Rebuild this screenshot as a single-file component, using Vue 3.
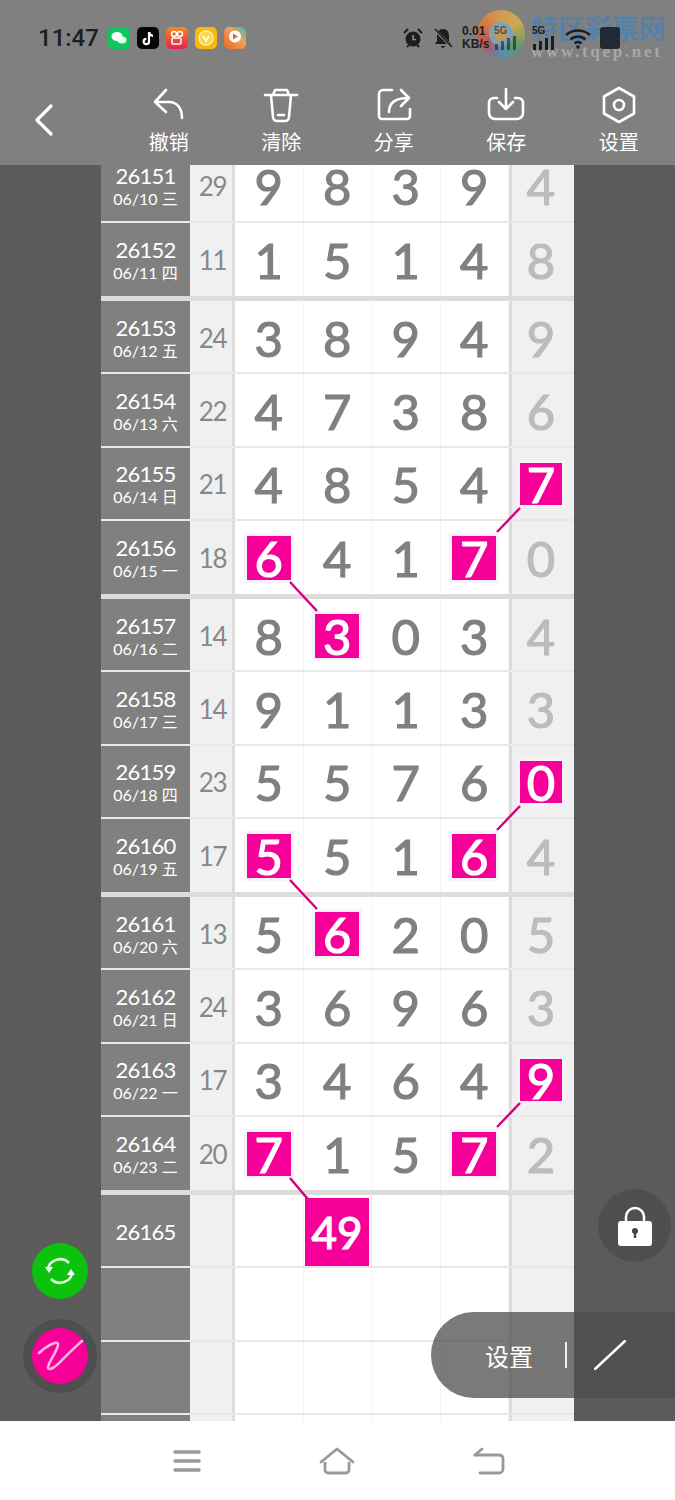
<template>
  <div class="page">
    <header class="top">
      <div class="status">
        <span class="time">11:47</span>
        <div class="apps">
          <svg v-for="a in apps" :key="a.name" class="app-icon" viewBox="0 0 22 22" v-html="a.svg"></svg>
        </div>
      </div>

      <div class="watermark">
        <div class="wm-logo"><div class="wm-hole"></div></div>
        <div class="wm-text">
          <div class="wm-name">特区彩票网</div>
          <div class="wm-url">www.tqep.net</div>
        </div>
      </div>

      <div class="sys">
        <svg class="sys-icon" viewBox="0 0 22 22">
          <circle cx="11" cy="12" r="7.5" fill="#1d1d1d" />
          <path d="M11 8v4.5h3" stroke="#8a8a8a" stroke-width="1.6" fill="none" />
          <path d="M2 6l4-4M20 6l-4-4M5 20l2-2M17 20l-2-2" stroke="#1d1d1d" stroke-width="2" />
        </svg>
        <svg class="sys-icon" viewBox="0 0 22 22">
          <path d="M11 2c-4 0-6 3-6 7v5l-2 3h16l-2-3V9c0-4-2-7-6-7z" fill="#1d1d1d" />
          <path d="M8.500 19h5l-2.500 2.500z" fill="#1d1d1d" />
          <path d="M2 2l18 18" stroke="#808080" stroke-width="3" />
          <path d="M3 2l17 18" stroke="#1d1d1d" stroke-width="1.500" />
        </svg>
        <div class="speed"><span>0.01</span><span>KB/s</span></div>
        <div class="signal-5g wide">
          <span>5G</span>
          <svg class="signal" viewBox="0 0 24 14">
            <rect x="1" y="8" width="3" height="6" fill="#1d1d1d" />
            <rect x="7" y="5" width="3" height="9" fill="#1d1d1d" />
            <rect x="13" y="2" width="3" height="12" fill="#1d1d1d" />
            <rect x="19" y="0" width="3" height="14" fill="#1d1d1d" />
          </svg>
        </div>
        <div class="signal-5g">
          <span>5G</span>
          <svg class="signal" viewBox="0 0 24 14">
            <rect x="1" y="8" width="3" height="6" fill="#1d1d1d" />
            <rect x="7" y="5" width="3" height="9" fill="#1d1d1d" />
            <rect x="13" y="2" width="3" height="12" fill="#1d1d1d" />
            <rect x="19" y="0" width="3" height="14" fill="#1d1d1d" />
          </svg>
        </div>
        <svg class="wifi" viewBox="0 0 28 22">
          <path d="M2 8c7-6 17-6 24 0M6.500 12.500c4.500-4 10.500-4 15 0M10.500 16.500c2-2 5-2 7 0" stroke="#1d1d1d" stroke-width="2.600" fill="none" />
          <circle cx="14" cy="20" r="1.800" fill="#1d1d1d" />
        </svg>
        <div class="battery"></div>
      </div>

      <div class="toolbar">
        <button class="back">
          <svg viewBox="0 0 24 36" width="24" height="36">
            <path d="M19 4L5 18l14 14" stroke="#fff" stroke-width="3.200" fill="none" stroke-linecap="round" stroke-linejoin="round" />
          </svg>
        </button>
        <div v-for="t in tools" :key="t.label" class="tool">
          <svg viewBox="0 0 40 40" width="40" height="40" class="tool-icon" v-html="t.svg"></svg>
          <span>{{ t.label }}</span>
        </div>
      </div>
    </header>

    <main class="main">
      <div class="table">
        <div v-for="(r, i) in rows" :key="i" class="row" :class="{ end: r.end }">
          <div class="issue">
            <span class="no">{{ r.no }}</span>
            <span v-if="r.date" class="date">{{ r.date }}</span>
          </div>
          <div class="sum">{{ r.sum }}</div>
          <div class="bar"></div>
          <div v-for="(d, j) in r.digits" :key="j" class="cell">
            <span v-if="r.hit === j || r.hit2 === j" class="hit">{{ d }}</span>
            <span v-else>{{ d }}</span>
          </div>
          <div class="bar"></div>
          <div class="last">
            <span v-if="r.lastHit" class="hit small">{{ r.last }}</span>
            <span v-else>{{ r.last }}</span>
          </div>
        </div>
      </div>

      <svg class="links" viewBox="0 165 675 1256">
        <line v-for="(l, i) in links" :key="i" :x1="l[0]" :y1="l[1]" :x2="l[2]" :y2="l[3]" />
      </svg>
      <div class="big-hit">49</div>

      <button class="round lock">
        <svg viewBox="0 0 40 44" width="40" height="44">
          <path d="M11 20v-7a9 9 0 0 1 18 0v7" stroke="#fff" stroke-width="2.500" fill="none" />
          <rect x="3" y="17" width="34" height="25" rx="3" fill="#fff" />
          <circle cx="20" cy="27" r="3" fill="#444" />
          <rect x="18.800" y="27" width="2.400" height="7" fill="#444" />
        </svg>
      </button>
      <button class="round refresh">
        <svg viewBox="0 0 56 56" width="56" height="56">
          <path d="M16 27a12 11 0 0 1 21-7M40 29a12 11 0 0 1-21 7" stroke="#d8ffd8" stroke-width="2.600" fill="none" />
          <path d="M13 24h8l-4 6zM43 32h-8l4-6z" fill="#fff" />
        </svg>
      </button>
      <div class="pen-ring">
        <button class="round pen">
          <svg viewBox="0 0 56 56" width="56" height="56">
            <path d="M7 25C13 19 25 12 26 16C27 21 15 36 16 40C17 43 24 39 30 32C36 26 44 18 50 13" stroke="#ffb4df" stroke-width="2.600" fill="none" stroke-linecap="round" />
          </svg>
        </button>
      </div>

      <div class="pill">
        <span class="pill-label">设置</span>
        <i class="pill-sep"></i>
        <div class="pill-btn">
          <svg viewBox="0 0 32 30" width="32" height="30">
            <path d="M1 29L31 1" stroke="#fff" stroke-width="2.500" stroke-linecap="round" />
          </svg>
        </div>
      </div>
    </main>

    <nav class="nav">
      <svg viewBox="0 0 28 24" width="28" height="24">
        <path d="M2 3h24M2 12h24M2 21h24" stroke="#999" stroke-width="3.400" stroke-linecap="round" />
      </svg>
      <svg viewBox="0 0 36 28" width="36" height="28">
        <path d="M2 15L18 2l16 13" stroke="#999" stroke-width="2.800" fill="none" stroke-linecap="round" stroke-linejoin="round" />
        <path d="M6 15v8a3 3 0 0 0 3 3h18a3 3 0 0 0 3-3v-8" stroke="#999" stroke-width="2.800" fill="none" />
      </svg>
      <svg viewBox="0 0 32 28" width="32" height="28">
        <path d="M2 8h24a4 4 0 0 1 4 3v11a4 4 0 0 1-4 4H7" stroke="#999" stroke-width="2.800" fill="none" stroke-linecap="round" />
        <path d="M9 2L2 8" stroke="#999" stroke-width="2.800" stroke-linecap="round" />
      </svg>
    </nav>
  </div>
</template>

<script setup>
const apps = [
  { name: 'wechat', svg: '<rect width="22" height="22" rx="5" fill="#0fc65c"/><ellipse cx="9" cy="9.500" rx="5.500" ry="4.500" fill="#fff"/><ellipse cx="14" cy="13" rx="4.500" ry="3.600" fill="#e6fff0"/>' },
  { name: 'tiktok', svg: '<rect width="22" height="22" rx="5" fill="#050505"/><path d="M12 5v9.500a2.700 2.700 0 1 1-2.700-2.700M12 5c.4 2.200 1.900 3.600 4 3.800" stroke="#fff" stroke-width="2.200" fill="none"/>' },
  { name: 'kuaishou', svg: '<defs><linearGradient id="ks" x1="0" y1="0" x2="0" y2="1"><stop offset="0" stop-color="#f58a1f"/><stop offset="1" stop-color="#e8204f"/></linearGradient></defs><rect width="22" height="22" rx="5" fill="url(#ks)"/><circle cx="8" cy="7" r="2.500" fill="none" stroke="#fff" stroke-width="1.500"/><circle cx="14" cy="7" r="2.500" fill="none" stroke="#fff" stroke-width="1.500"/><rect x="6" y="11" width="9" height="6" rx="1.500" fill="none" stroke="#fff" stroke-width="1.500"/>' },
  { name: 'coin', svg: '<rect width="22" height="22" rx="5" fill="#f5b90f"/><circle cx="11" cy="11" r="7" fill="#f9d74a" stroke="#fff2b0" stroke-width="1.400"/><path d="M8 9l3 5 3-5" stroke="#fff" stroke-width="1.500" fill="none"/>' },
  { name: 'tv', svg: '<defs><linearGradient id="tv" x1="0" y1="1" x2="1" y2="0"><stop offset="0" stop-color="#f0641e"/><stop offset=".6" stop-color="#eda25e"/><stop offset="1" stop-color="#2cc0a0"/></linearGradient></defs><rect width="22" height="22" rx="5" fill="url(#tv)"/><circle cx="11" cy="9.500" r="6" fill="#fff"/><path d="M9 6.500l5 3-5 3z" fill="#f0641e"/>' }
]

const sw = 'stroke="#fff" stroke-width="2.600" fill="none" stroke-linecap="round" stroke-linejoin="round"'
const tools = [
  { label: '撤销', svg: `<path d="M17 5L6 17l11 10M6 17h14c8 0 13 6 13 16" ${sw}/>` },
  { label: '清除', svg: `<path d="M4 10h32M12 10l2-5h12l2 5M10 10l2 22a4 4 0 0 0 4 4h8a4 4 0 0 0 4-4l2-22M17 30h6" ${sw}/>` },
  { label: '分享', svg: `<path d="M18 5H9a4 4 0 0 0-4 4v22a3 3 0 0 0 3 3h25a3 3 0 0 0 3-3v-7M15 27c0-9 6-14 19-14M27 5l8 8-8 8" ${sw}/>` },
  { label: '保存', svg: `<path d="M11 13H8a5 5 0 0 0-5 5v10a6 6 0 0 0 6 6h22a6 6 0 0 0 6-6V18a5 5 0 0 0-5-5h-3M20 4v20M13 17l7 7 7-7" ${sw}/>` },
  { label: '设置', svg: `<path d="M20 3l15 8.500v17L20 37 5 28.500v-17z" ${sw}/><circle cx="20" cy="20" r="5" ${sw}/>` }
]

// hit = index of the marked digit, lastHit = the last column is marked
const raw = [
  ['26151', '06/10 三', 29, [9, 8, 3, 9], 4],
  ['26152', '06/11 四', 11, [1, 5, 1, 4], 8],
  ['26153', '06/12 五', 24, [3, 8, 9, 4], 9],
  ['26154', '06/13 六', 22, [4, 7, 3, 8], 6],
  ['26155', '06/14 日', 21, [4, 8, 5, 4], 7, { lastHit: true }],
  ['26156', '06/15 一', 18, [6, 4, 1, 7], 0, { hit: 0, hit2: 3 }],
  ['26157', '06/16 二', 14, [8, 3, 0, 3], 4, { hit: 1 }],
  ['26158', '06/17 三', 14, [9, 1, 1, 3], 3],
  ['26159', '06/18 四', 23, [5, 5, 7, 6], 0, { lastHit: true }],
  ['26160', '06/19 五', 17, [5, 5, 1, 6], 4, { hit: 0, hit2: 3 }],
  ['26161', '06/20 六', 13, [5, 6, 2, 0], 5, { hit: 1 }],
  ['26162', '06/21 日', 24, [3, 6, 9, 6], 3],
  ['26163', '06/22 一', 17, [3, 4, 6, 4], 9, { lastHit: true }],
  ['26164', '06/23 二', 20, [7, 1, 5, 7], 2, { hit: 0, hit2: 3 }]
]

const rows = raw.map((r, i) => ({
  no: r[0],
  date: r[1],
  sum: r[2],
  digits: r[3],
  last: r[4],
  ...(r[5] || {}),
  end: i % 4 === 1
}))
rows.push({ no: '26165', date: '', sum: '', digits: ['', '', '', ''], last: '' })
rows.push({ no: '', date: '', sum: '', digits: ['', '', '', ''], last: '' })
rows.push({ no: '', date: '', sum: '', digits: ['', '', '', ''], last: '' })
rows.push({ no: '', date: '', sum: '', digits: ['', '', '', ''], last: '' })

// connectors between marked numbers, in page coordinates
const links = [
  [290, 582, 317, 611],
  [520, 508, 497, 532],
  [290, 880, 317, 909],
  [520, 806, 497, 830],
  [520, 1103, 497, 1127],
  [290, 1178, 312, 1204]
]
</script>

<style scoped>
.page {
  width: 675px;
  height: 1500px;
  overflow: hidden;
  position: relative;
  font-family: Lato, "Noto Sans CJK SC", sans-serif;
  background: #fff;
}

.top {
  height: 165px;
  background: #808080;
  position: relative;
  box-sizing: border-box;
}

.status {
  height: 75px;
  display: flex;
  align-items: center;
  padding: 0 0 0 38px;
}

.time {
  font: 500 24px Roboto, sans-serif;
  color: #1d1d1d;
  width: 70px;
}

.apps {
  display: flex;
  gap: 7px;
}

.app-icon {
  width: 22px;
  height: 22px;
}

.sys {
  position: absolute;
  left: 402px;
  top: 26px;
  display: flex;
  align-items: center;
  height: 24px;
}

.sys-icon {
  width: 22px;
  height: 22px;
  margin-right: 8px;
}

.speed {
  display: flex;
  flex-direction: column;
  font: 700 12px/13px "Liberation Sans", sans-serif;
  color: #1d1d1d;
  width: 32px;
  margin-left: 0;
}

.signal-5g {
  display: flex;
  flex-direction: column;
  font: 700 10px/10px "Liberation Sans", sans-serif;
  color: #1d1d1d;
  width: 32px;
}

.signal-5g.wide {
  width: 38px;
  opacity: 0.6;
}

.signal {
  width: 24px;
  height: 14px;
}

.wifi {
  width: 28px;
  height: 22px;
  margin-right: 8px;
}

.battery {
  width: 20px;
  height: 22px;
  background: #1f2a33;
  border-radius: 3px;
}

.toolbar {
  height: 90px;
  display: flex;
  align-items: flex-start;
}

.back {
  width: 112.500px;
  height: 90px;
  border: 0;
  padding: 0 0 0 32px;
  background: none;
  text-align: left;
  margin-top: 1px;
}

.tool {
  width: 112.500px;
  display: flex;
  flex-direction: column;
  align-items: center;
  color: #fff;
  font-size: 20px;
  line-height: 26px;
  padding-top: 10px;
}

.tool-icon {
  margin-bottom: 4px;
}

.watermark {
  position: absolute;
  left: 477px;
  top: 10px;
  display: flex;
  gap: 6px;
  pointer-events: none;
}

.wm-logo {
  width: 48px;
  height: 48px;
  border-radius: 50%;
  background: conic-gradient(#e0a24a, #d9b04a, #5fa35f, #4f8ec0, #c94f4f, #e07a3a, #e0a24a);
  opacity: 0.85;
  display: flex;
  align-items: center;
  justify-content: center;
}

.wm-hole {
  width: 14px;
  height: 14px;
  border-radius: 50%;
  border: 5px solid #7fa9c7;
  background: #c2a25a;
}

.wm-name {
  font: 700 27px/30px "Noto Sans CJK SC", sans-serif;
  color: #5580a8;
  white-space: nowrap;
  margin-top: 3px;
}

.wm-url {
  font: 700 17px/18px "Liberation Serif", serif;
  color: #a8a8a8;
  letter-spacing: 2.700px;
  white-space: nowrap;
  margin-top: 0;
}

.main {
  height: 1256px;
  background: #5b5b5b;
  position: relative;
  overflow: hidden;
}

.table {
  width: 473px;
  margin: -15.500px 0 0 101px;
}

.row {
  display: grid;
  grid-template-columns: 89px 42px 3px repeat(4, 68.500px) 3px 62px;
  height: 73.250px;
  padding-bottom: 2px;
  box-sizing: border-box;
  background: #e8e8e8;
}

.row.end {
  height: 78.250px;
  padding-bottom: 5px;
  background: #dcdcdc;
}

.issue {
  background: #808080;
  color: #fff;
  display: flex;
  flex-direction: column;
  align-items: center;
  justify-content: center;
  padding-top: 2px;
}

.no {
  font-size: 22px;
  line-height: 26px;
  letter-spacing: -0.800px;
}

.date {
  font-size: 16px;
  line-height: 20px;
}

.sum {
  background: #f0f0f0;
  color: #888;
  font-size: 26px;
  letter-spacing: -1.400px;
  padding: 2px 0 0 3px;
  display: flex;
  align-items: center;
  justify-content: center;
}

.bar {
  background: #dcdcdc;
}

.cell {
  background: #fff;
  color: #808080;
  font-size: 49px;
  padding-top: 2px;
  border-right: 1px solid #f3f3f3;
  -webkit-text-stroke: 1.200px;
  display: flex;
  align-items: center;
  justify-content: center;
}

.last {
  background: #f0f0f0;
  color: #bcbcbc;
  font-size: 49px;
  padding: 2px 4px 0 0;
  -webkit-text-stroke: 1.200px;
  display: flex;
  align-items: center;
  justify-content: center;
}

.hit {
  width: 44px;
  height: 44px;
  background: #f7009a;
  color: #fff;
  display: flex;
  align-items: center;
  justify-content: center;
  box-shadow: 0 0 0 3px #f6f2f7;
}

.hit.small {
  width: 42px;
  height: 42px;
}

.links {
  position: absolute;
  left: 0;
  top: 0;
  width: 675px;
  height: 1256px;
  pointer-events: none;
}

.links line {
  stroke: #d6007f;
  stroke-width: 2.500;
}

.big-hit {
  position: absolute;
  left: 305px;
  top: 1033px;
  width: 64px;
  height: 68px;
  background: #f7009a;
  color: #fff;
  font-size: 44px;
  -webkit-text-stroke: 1.200px;
  display: flex;
  align-items: center;
  justify-content: center;
}

.round {
  position: absolute;
  border: 0;
  padding: 0;
  border-radius: 50%;
  display: flex;
  align-items: center;
  justify-content: center;
}

.lock {
  left: 598px;
  top: 1024px;
  width: 73px;
  height: 73px;
  background: #4f4f4f;
}

.refresh {
  left: 32px;
  top: 1078px;
  width: 56px;
  height: 56px;
  background: #0cc20c;
}

.pen-ring {
  position: absolute;
  left: 23px;
  top: 1154px;
  width: 74px;
  height: 74px;
  border-radius: 50%;
  background: #4e4e4e;
}

.pen {
  left: 9px;
  top: 9px;
  width: 56px;
  height: 56px;
  background: #f7009a;
}

.pill {
  position: absolute;
  left: 431px;
  top: 1147px;
  width: 244px;
  height: 86px;
  border-radius: 43px 0 0 43px;
  background: rgba(76, 76, 76, 0.744);
  color: #fff;
  font-size: 24px;
  display: flex;
  align-items: center;
}

.pill-label {
  margin-left: 54px;
  width: 80px;
}

.pill-sep {
  width: 2px;
  height: 26px;
  background: #f0f0f0;
}

.pill-btn {
  margin-left: 27px;
  display: flex;
}

.nav {
  height: 79px;
  background: #fff;
  display: flex;
  align-items: center;
  justify-content: center;
  gap: 118px;
  padding: 0 0 1px 2px;
}
</style>

<style>
html,
body {
  margin: 0;
  background: #fff;
}
</style>
